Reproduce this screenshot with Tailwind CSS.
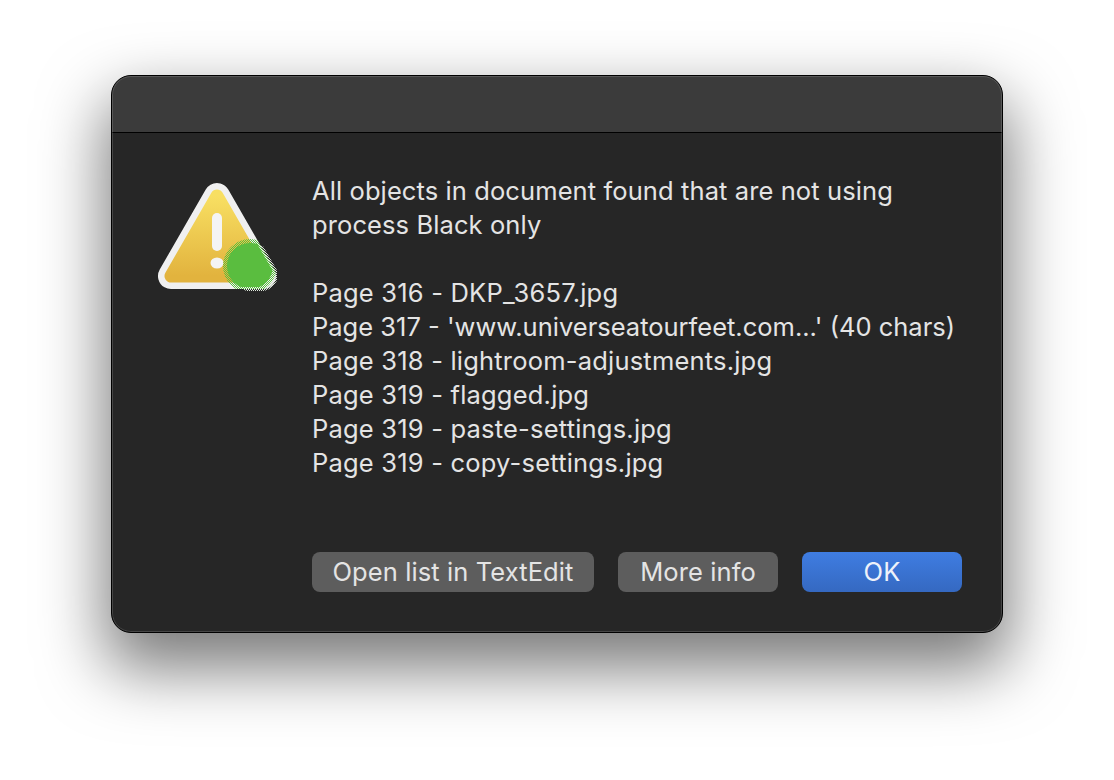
<!DOCTYPE html>
<html lang="en">
<head>
  <meta charset="UTF-8" />
  <title>Alert</title>
  <script src="https://cdn.jsdelivr.net/npm/@tailwindcss/browser@4"></script>
</head>
<body class="bg-white w-[1114px] h-[780px] overflow-hidden font-['Inter','Liberation_Sans',sans-serif]">
  <div class="pt-[75px] pl-[111px]">
    <!-- Dialog window -->
    <div class="relative w-[892px] h-[558px] flex flex-col rounded-[20px] overflow-hidden bg-[#262626] border border-black shadow-[0_30px_65px_6px_rgba(0,0,0,0.52)]">
      <div class="h-[57px] shrink-0 bg-[#3b3b3b] border-b border-black"></div>

      <div class="flex-1 flex pl-[45px] pr-[39px] pt-[41px] pb-[40px]">
        <!-- Warning icon -->
        <svg class="w-[120px] h-[112px] mt-[8px] shrink-0" viewBox="156 182 120 112">
          <defs>
            <linearGradient id="yellow" x1="0" y1="0" x2="0" y2="1">
              <stop offset="0" stop-color="#f8df62" />
              <stop offset="1" stop-color="#e2b33e" />
            </linearGradient>
            <pattern id="ditherLight" width="2" height="2" patternUnits="userSpaceOnUse">
              <rect width="1" height="1" fill="#dfe8dc" />
              <rect x="1" y="1" width="1" height="1" fill="#dfe8dc" />
            </pattern>
            <pattern id="ditherGreen" width="2" height="2" patternUnits="userSpaceOnUse">
              <rect width="1" height="1" fill="#5abd3f" />
              <rect x="1" y="1" width="1" height="1" fill="#5abd3f" />
            </pattern>
            <mask id="iconEdge" maskUnits="userSpaceOnUse" x="156" y="182" width="120" height="112">
              <polygon points="216,196 170,276 262,276" fill="#fff" stroke="#fff" stroke-width="30" stroke-linejoin="round" />
            </mask>
            <mask id="iconShape" maskUnits="userSpaceOnUse" x="156" y="182" width="120" height="112">
              <polygon points="216,196 170,276 262,276" fill="#fff" stroke="#fff" stroke-width="26" stroke-linejoin="round" />
            </mask>
            <mask id="iconInner" maskUnits="userSpaceOnUse" x="156" y="182" width="120" height="112">
              <polygon points="216,196 170,276 262,276" fill="#fff" stroke="#fff" stroke-width="22" stroke-linejoin="round" />
            </mask>
          </defs>
          <polygon points="216,196 170,276 262,276" fill="#f0f0f0" stroke="#f0f0f0" stroke-width="26" stroke-linejoin="round" />
          <polygon points="216,196 170,276 262,276" fill="url(#yellow)" stroke="url(#yellow)" stroke-width="13" stroke-linejoin="round" />
          <rect x="211" y="213" width="10" height="38" rx="5" fill="#f4f4f4" />
          <ellipse cx="216" cy="263" rx="6.5" ry="5.5" fill="#f4f4f4" />
          <circle cx="255" cy="269" r="24" fill="url(#ditherLight)" mask="url(#iconEdge)" />
          <circle cx="249" cy="266" r="27" fill="url(#ditherGreen)" mask="url(#iconShape)" />
          <circle cx="249" cy="266" r="23" fill="#5abd3f" mask="url(#iconInner)" />
        </svg>

        <!-- Message and buttons -->
        <div class="ml-[35px] flex-1 flex flex-col justify-between text-[#e4e4e4] text-[25.5px] tracking-[0.1px] leading-[34px]">
          <div>
            <p>All objects in document found that are not using<br />process Black only</p>
            <ul class="mt-[34px] tracking-[0.2px]">
              <li>Page 316 - DKP_3657.jpg</li>
              <li class="tracking-normal">Page 317 - 'www.universeatourfeet.com...' (40 chars)</li>
              <li>Page 318 - lightroom-adjustments.jpg</li>
              <li>Page 319 - flagged.jpg</li>
              <li>Page 319 - paste-settings.jpg</li>
              <li>Page 319 - copy-settings.jpg</li>
            </ul>
          </div>
          <div class="flex gap-[24px]">
            <button class="w-[282px] h-[40px] rounded-[8px] bg-[#5d5d5d]">Open list in TextEdit</button>
            <button class="w-[160px] h-[40px] rounded-[8px] bg-[#5d5d5d]">More info</button>
            <button class="w-[160px] h-[40px] rounded-[8px] bg-gradient-to-b from-[#3f7de2] to-[#3569c1] text-[#eef2fa]">OK</button>
          </div>
        </div>
      </div>
      <!-- Light inner rim of the window -->
      <div class="absolute inset-0 rounded-[19px] border border-white/15 pointer-events-none"></div>
    </div>
  </div>
</body>
</html>
